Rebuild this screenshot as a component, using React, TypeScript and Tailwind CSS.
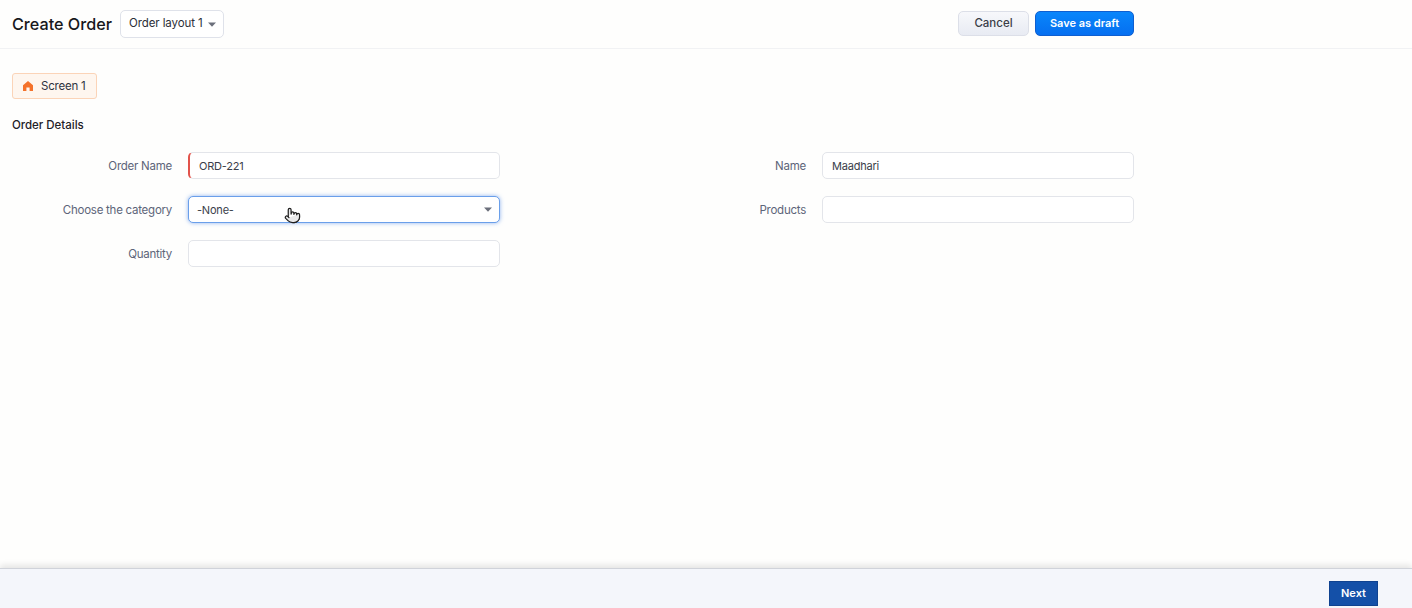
import React from "react";
import { Pointer } from "lucide-react";

const font = "[font-family:Inter,'Noto_Sans',sans-serif]";

function Caret({ className = "" }: { className?: string }) {
  return (
    <svg width="8" height="5" viewBox="0 0 8 5" className={className}>
      <path d="M0 0.5h8L4 4.8z" fill="#6b6f7b" />
    </svg>
  );
}

function Field({
  label,
  value,
  required,
  focused,
  select,
}: {
  label: string;
  value?: string;
  required?: boolean;
  focused?: boolean;
  select?: boolean;
}) {
  return (
    <div className="flex items-center gap-4 h-[27px]">
      <div className="w-[160px] pt-[2px] text-right text-[11.5px] tracking-[-0.25px] text-[#5d6579]">{label}</div>
      <div
        className={`relative flex items-center justify-between w-[312px] h-[27px] bg-white rounded-[5px] border text-[11px] tracking-[-0.2px] text-[#3a3e4a] ${
          focused
            ? "border-[#6a9fea] shadow-[0_0_4px_rgba(70,130,230,0.6)] pl-2 pr-[7px]"
            : "border-[#e3e5ea] pl-[9px] pr-2"
        } ${required ? "border-l-2 border-l-[#e2534b]" : ""}`}
      >
        <span className="pt-[1px]">{value}</span>
        {select && <Caret />}
        {focused && (
          <span className="absolute left-[95px] top-[10px] text-[#1d1d1d]">
            <Pointer size={17} strokeWidth={1.7} fill="#e9e9ea" />
          </span>
        )}
      </div>
    </div>
  );
}

export default function App() {
  return (
    <div className={`${font} flex flex-col w-[1412px] h-[608px] bg-[#fefefd] overflow-hidden`}>
      <header className="flex items-center justify-between h-[49px] shrink-0 border-b border-[#f1f2f4] pl-3 pr-[278px]">
        <div className="flex items-center gap-2">
          <h1 className="text-[16.2px] font-medium text-[#17181c]">Create Order</h1>
          <button className="flex items-center gap-[5px] h-[28px] pl-[8px] pr-[7px] bg-white border border-[#dfe2ea] rounded-[5px] text-[11.5px] tracking-[-0.1px] text-[#2c2f38]">
            Order layout 1
            <Caret />
          </button>
        </div>
        <div className="flex items-center gap-[6px] pb-[1px]">
          <button className="w-[71px] h-[25px] rounded-[5px] border border-[#dcdfe8] bg-gradient-to-b from-[#f7f8fb] to-[#e8ebf3] text-[11.5px] font-medium text-[#3a3d47]">
            Cancel
          </button>
          <button className="w-[99px] h-[25px] rounded-[5px] border border-[#0f5fd0] bg-gradient-to-b from-[#0a86fb] to-[#066ff0] text-[11px] font-semibold text-white">
            Save as draft
          </button>
        </div>
      </header>

      <main className="flex-1 pl-3 pt-6">
        <div className="flex items-center gap-[7px] w-[85px] h-[26px] pl-[9px] rounded-[3px] border border-[#fbd4b8] bg-[#fef6ef] text-[11.5px] tracking-[-0.2px] text-[#2f3340]">
          <svg width="12" height="12" viewBox="0 0 12 12">
            <path d="M6 1 L11 5.2 V11 H7.6 V7.6 H4.4 V11 H1 V5.2 Z" fill="#f4722b" />
          </svg>
          <span className="pt-[1px]">Screen 1</span>
        </div>
        <h2 className="mt-[19px] text-[11.5px] leading-[15px] tracking-[-0.02px] font-medium text-[#1f2128]">Order Details</h2>
        <div className="grid grid-cols-[488px_488px] gap-x-[146px] gap-y-[17px] mt-[19px]">
          <Field label="Order Name" value="ORD-221" required />
          <Field label="Name" value="Maadhari" />
          <Field label="Choose the category" value="-None-" focused select />
          <Field label="Products" />
          <Field label="Quantity" />
        </div>
      </main>

      <footer className="flex items-center justify-end h-[40px] shrink-0 bg-[#f4f6fb] border-t border-[#d0d3da] shadow-[0_-3px_6px_rgba(0,0,0,0.1)] pr-[34px]">
        <button className="mt-[10px] w-[49px] h-[25px] bg-[#1450a8] border border-[#0f4290] text-[11px] font-semibold text-white">
          Next
        </button>
      </footer>
    </div>
  );
}
